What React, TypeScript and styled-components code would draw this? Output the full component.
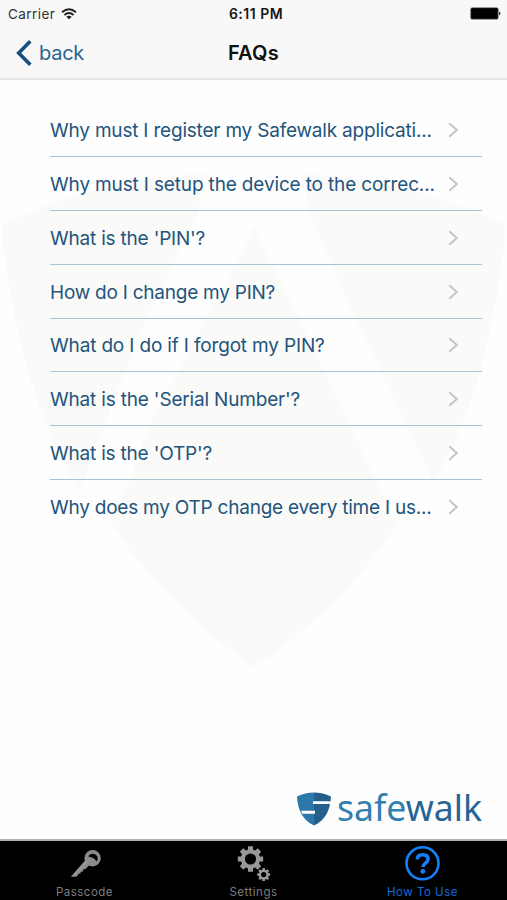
import React from "react";
import styled, { createGlobalStyle } from "styled-components";

const GlobalStyle = createGlobalStyle`
  * { box-sizing: border-box; }
  body { margin: 0; background: #fff; font-family: Inter, "Liberation Sans", sans-serif; }
`;

const Screen = styled.div`
  width: 507px;
  height: 900px;
  display: flex;
  flex-direction: column;
  overflow: hidden;
  background: #fefefe;
`;

const Header = styled.header`
  height: 80px;
  flex: none;
  background: #f8f8f8;
  border-bottom: 2px solid #e5e5e5;
`;

const Bar = styled.div<{ $height: number }>`
  height: ${(p) => p.$height}px;
  display: grid;
  grid-template-columns: 1fr auto 1fr;
  align-items: center;
`;

const Carrier = styled.div`
  display: flex;
  align-items: center;
  gap: 6px;
  padding-left: 8px;
  font-size: 13.5px;
  letter-spacing: 0.45px;
  color: #303030;
`;

const Clock = styled.div`
  font-size: 14px;
  font-weight: 600;
  letter-spacing: 0.5px;
  color: #161616;
  padding-left: 5px;
`;

const Battery = styled.div`
  display: flex;
  justify-content: flex-end;
  padding-right: 6px;
`;

const BackButton = styled.button`
  display: flex;
  align-items: center;
  gap: 7px;
  padding: 0 0 0 16px;
  border: 0;
  background: none;
  font: 400 20px Inter, sans-serif;
  letter-spacing: -0.25px;
  color: #2b6490;
`;

const Title = styled.h1`
  margin: 0;
  font-size: 20px;
  font-weight: 600;
  letter-spacing: 0.25px;
  color: #111;
`;

const Content = styled.main`
  position: relative;
  flex: 1;
  display: flex;
  flex-direction: column;
  justify-content: space-between;
  padding-top: 23.4px;
`;

const Watermark = styled.svg`
  position: absolute;
  left: 0;
  top: 80px;
`;

const List = styled.ul`
  position: relative;
  list-style: none;
  margin: 0 25px 0 50px;
  padding: 0;
`;

const Row = styled.li`
  height: 53.8px;
  display: flex;
  align-items: center;
  justify-content: space-between;
  padding: 1px 23px 0 0;
  border-bottom: 1px solid #a9c1d5;
  &:last-child { border-bottom-color: transparent; }
`;

const Question = styled.span<{ $spacing: number }>`
  padding-top: 2px;
  font-size: 19px;
  line-height: 26px;
  letter-spacing: ${(p) => p.$spacing}px;
  white-space: nowrap;
  color: #23547c;
`;

const Brand = styled.div`
  align-self: flex-end;
  display: flex;
  align-items: center;
  gap: 7px;
  padding: 0 24px 12px 0;
`;

const Wordmark = styled.svg`
  display: block;
  overflow: visible;
`;

const TabBar = styled.nav`
  height: 61px;
  flex: none;
  display: grid;
  grid-template-columns: repeat(3, 169px);
  background: #000;
  border-top: 2px solid #b0b0b0;
`;

const Tab = styled.a<{ $active?: boolean }>`
  display: flex;
  flex-direction: column;
  align-items: center;
  justify-content: space-between;
  padding: 4px 0 1px;
  color: ${(p) => (p.$active ? "#147efb" : "#929292")};
`;

const TabLabel = styled.span`
  font-size: 11.5px;
  line-height: 14px;
  letter-spacing: 0.5px;
  opacity: 0.86;
`;

const questions: { text: string; spacing: number }[] = [
  { text: "Why must I register my Safewalk applicati...", spacing: -0.2 },
  { text: "Why must I setup the device to the correc...", spacing: -0.15 },
  { text: "What is the 'PIN'?", spacing: -0.2 },
  { text: "How do I change my PIN?", spacing: -0.24 },
  { text: "What do I do if I forgot my PIN?", spacing: -0.16 },
  { text: "What is the 'Serial Number'?", spacing: -0.18 },
  { text: "What is the 'OTP'?", spacing: -0.2 },
  { text: "Why does my OTP change every time I us...", spacing: -0.23 },
];

const gearPath = (cx: number, cy: number, outer: number, root: number, hole: number) => {
  const points: string[] = [];
  for (let i = 0; i < 8; i++) {
    const base = (i * Math.PI) / 4;
    [[-0.27, root], [-0.19, outer], [0.19, outer], [0.27, root]].forEach(([a, r]) => {
      points.push(`${(cx + r * Math.sin(base + a)).toFixed(2)} ${(cy - r * Math.cos(base + a)).toFixed(2)}`);
    });
  }
  return `M${points.join("L")}ZM${cx - hole} ${cy}a${hole} ${hole} 0 1 0 ${hole * 2} 0a${hole} ${hole} 0 1 0 ${-hole * 2} 0Z`;
};

const WifiIcon = () => (
  <svg width="16" height="12" viewBox="0 0 16 12" fill="none" stroke="#202020" strokeWidth="1.9">
    <path d="M1 4.2Q8 -1.6 15 4.2M3.4 7Q8 3.1 12.6 7" />
    <path d="M8 11.3 5.3 8.7Q8 6.7 10.7 8.7Z" fill="#202020" stroke="none" />
  </svg>
);

const BatteryIcon = () => (
  <svg width="31" height="13" viewBox="0 0 31 13">
    <rect x="0.7" y="0.7" width="27.5" height="11.5" rx="1.5" fill="#000" stroke="#777" strokeWidth="0.6" />
    <path d="M29 4.5Q32 6.5 29 8.5Z" fill="#333" />
  </svg>
);

const BackIcon = () => (
  <svg width="16" height="26" viewBox="0 0 16 26" fill="none" stroke="#174f7d" strokeWidth="3.6">
    <path d="M14.3 1.3 2.7 13l11.6 11.7" />
  </svg>
);

const ChevronIcon = () => (
  <svg width="11" height="16" viewBox="0 0 11 16" fill="none" stroke="#c5c5c8" strokeWidth="2">
    <path d="M1.3 1.2 8.8 8l-7.5 6.8" />
  </svg>
);

const KeyIcon = () => (
  <svg width="32" height="36" viewBox="0 0 32 36">
    <path
      fill="#8d8d8d"
      d="M16 15.5 1.8 31.8H7L9 30.6 9.3 28.8 11.4 28.6 11.8 26.7 13.9 26.4 14.2 24.4 16.5 24 21.5 19Z"
    />
    <circle cx="23.6" cy="13.2" r="8.2" fill="#8d8d8d" />
    <path d="M19 11.2A5.3 5.3 0 0 1 28.8 13.6 5 5 0 0 1 27.5 16.5Q25.5 12.7 19 11.2Z" fill="#080808" />
    <path d="m4.3 31 14-14.4" stroke="#a8a8a8" strokeWidth="1" />
  </svg>
);

const GearsIcon = () => (
  <svg width="34" height="38" viewBox="0 0 34 38" fill="#989898" fillRule="evenodd">
    <path d={gearPath(13.5, 14, 12.9, 9.7, 5.6)} />
    <path d={gearPath(26.7, 29.6, 6.6, 5, 2.6)} />
  </svg>
);

const HelpIcon = () => (
  <svg width="36" height="36" viewBox="0 0 36 36" fill="none" stroke="#147efb">
    <circle cx="17.5" cy="18.3" r="16" strokeWidth="2.6" />
    <path d="M12.2 14.3C12.4 11.2 14.5 9.8 17.6 9.8c3.2 0 5.5 1.5 5.5 4.3 0 4-5.2 4.1-5.2 8" strokeWidth="3.6" />
    <circle cx="17.8" cy="26.4" r="2.4" fill="#147efb" stroke="none" />
  </svg>
);

const ShieldLogo = () => (
  <svg width="34" height="34" viewBox="0 0 34 34">
    <path d="M0 4.4Q8 .5 17 .5V33.5C5 27.5 1 18 0 4.4Z" fill="#2c78aa" />
    <path d="M17 .5Q26 .5 34 4.4C33 18 29 27.5 17 33.5Z" fill="#24608d" />
    <path d="M16 9.2H33.7V12H16ZM4 18.8H18V21.8H5.2Z" fill="#fefefe" />
  </svg>
);

const tabs = [
  { label: "Passcode", icon: <KeyIcon /> },
  { label: "Settings", icon: <GearsIcon /> },
  { label: "How To Use", icon: <HelpIcon />, active: true },
];

export default function App() {
  return (
    <Screen>
      <GlobalStyle />
      <Header>
        <Bar $height={27}>
          <Carrier>Carrier <WifiIcon /></Carrier>
          <Clock>6:11 PM</Clock>
          <Battery><BatteryIcon /></Battery>
        </Bar>
        <Bar $height={51}>
          <BackButton><BackIcon />back</BackButton>
          <Title>FAQs</Title>
        </Bar>
      </Header>
      <Content>
        <Watermark width="507" height="520" viewBox="0 160 507 520" fill="#fafaf8">
          <path d="M2 225Q90 181 205 173L197 215 147 318 118 389 80 492Q22 400 2 237Z" />
          <path d="M505 225Q417 181 300 173L310 215 355 318 428 470 433 483Q487 395 505 237Z" />
          <path d="M254 226 283 285 377 481 397 526Q340 610 254 667 168 610 110 522L131 478 150 422 225 285Z" />
        </Watermark>
        <List>
          {questions.map((q) => (
            <Row key={q.text}>
              <Question $spacing={q.spacing}>{q.text}</Question>
              <ChevronIcon />
            </Row>
          ))}
        </List>
        <Brand>
          <ShieldLogo />
          <Wordmark width="145" height="36" viewBox="0 0 145 36">
            <text x="-1" y="29.8" fontFamily="'Noto Sans', sans-serif" fontSize="36" textLength="145" lengthAdjust="spacingAndGlyphs">
              <tspan fill="#327fb1">safe</tspan><tspan fill="#286594">walk</tspan>
            </text>
          </Wordmark>
        </Brand>
      </Content>
      <TabBar>
        {tabs.map((tab) => (
          <Tab key={tab.label} $active={tab.active}>
            {tab.icon}
            <TabLabel>{tab.label}</TabLabel>
          </Tab>
        ))}
      </TabBar>
    </Screen>
  );
}
